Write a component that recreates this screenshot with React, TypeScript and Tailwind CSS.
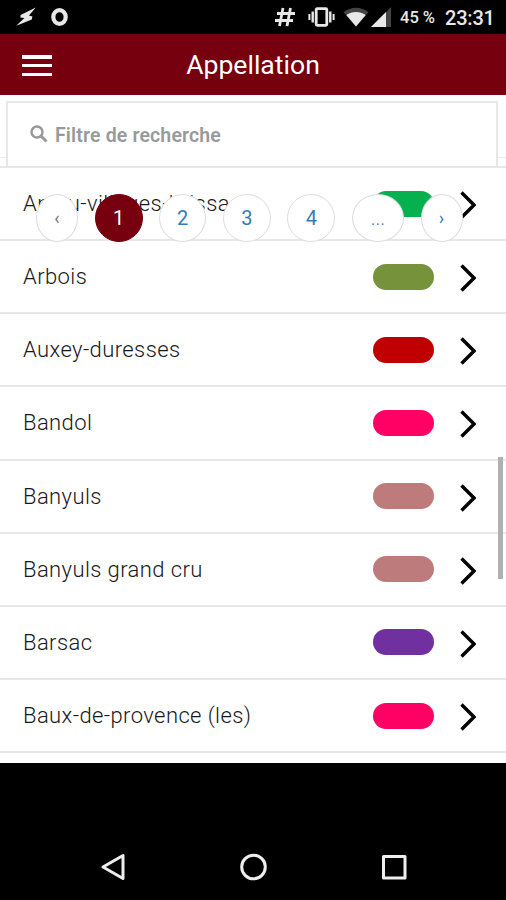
interface Appellation {
  name: string;
  color: string;
}

const appellations: Appellation[] = [
  { name: "Anjou-villages-brissac", color: "bg-[#04b14e]" },
  { name: "Arbois", color: "bg-[#76923a]" },
  { name: "Auxey-duresses", color: "bg-[#c00000]" },
  { name: "Bandol", color: "bg-[#ff0065]" },
  { name: "Banyuls", color: "bg-[#be7b7b]" },
  { name: "Banyuls grand cru", color: "bg-[#be7b7b]" },
  { name: "Barsac", color: "bg-[#7030a0]" },
  { name: "Baux-de-provence (les)", color: "bg-[#ff0065]" },
];

const pages = [
  { label: "‹", className: "w-[42px] bg-white text-[#777] border-[#ddd] text-[18px]" },
  { label: "1", className: "w-12 bg-[#76000d] text-white border-[#76000d] text-[20px]" },
  { label: "2", className: "w-[47px] bg-white text-[#337ab7] border-[#ddd] text-[20px]" },
  { label: "3", className: "w-12 bg-white text-[#337ab7] border-[#ddd] text-[20px]" },
  { label: "4", className: "w-12 bg-white text-[#337ab7] border-[#ddd] text-[20px]" },
  { label: "...", className: "w-[52px] bg-white text-[#337ab7] border-[#ddd] text-[20px] font-light" },
  { label: "›", className: "w-[42px] bg-white text-[#337ab7] border-[#ddd] text-[18px]" },
];

function StatusBar() {
  return (
    <div className="h-[34px] shrink-0 flex items-center bg-black text-[#e8e8e8]">
      <svg className="w-5 h-5 ml-4" viewBox="0 0 20 20" fill="currentColor">
        <path d="M19.8 0.5L4.6 8L4.4 10.4L8.4 11L0.3 18.8L15.8 12.4L16.4 9.6L13 8.4Z" />
      </svg>
      <svg className="w-[17px] h-[18px] ml-[15px]" viewBox="0 0 17 18" fill="none" stroke="currentColor" strokeWidth={4.2}>
        <ellipse cx="8.5" cy="9" rx="6.2" ry="6.9" />
      </svg>
      <div className="ml-auto flex items-center">
        <svg className="w-5 h-5" viewBox="0 0 20 20" fill="none" stroke="currentColor" strokeWidth={2.8}>
          <path d="M8 1L4.5 19M15.5 1L12 19M2 6.5H20M0 13.5H18" />
        </svg>
        <svg className="w-[27px] h-5 ml-[13px]" viewBox="0 0 27 20" fill="none" stroke="currentColor">
          <rect x="8.2" y="1.7" width="10.6" height="16.6" rx="1" strokeWidth={2.8} />
          <path d="M4.7 4.5V15.5M22.3 4.5V15.5" strokeWidth={2.4} />
          <path d="M1.4 7V13M25.6 7V13" strokeWidth={2} />
        </svg>
        <svg className="w-[26px] h-5 ml-2" viewBox="0 0 26 20">
          <path d="M0.5 5.2C8 -0.8 18 -0.8 25.5 5.2L13 19.5Z" fill="#444" />
          <path d="M3.3 8C9 3.9 17 3.9 22.7 8L13 19.5Z" fill="currentColor" />
        </svg>
        <svg className="w-5 h-5 ml-0.5" viewBox="0 0 20 20">
          <path d="M20 0V20H0Z" fill="#444" />
          <path d="M15 5V20H0Z" fill="currentColor" />
        </svg>
        <span className="w-[36px] ml-[9px] mt-0.5 text-[16.5px] font-medium whitespace-nowrap">45 %</span>
        <span className="w-[50px] ml-[9px] mr-[11px] mt-0.5 text-[20px] font-medium leading-6 tracking-[-0.2px]">23:31</span>
      </div>
    </div>
  );
}

function Header() {
  return (
    <header className="relative h-[61px] shrink-0 flex items-center justify-center bg-[#76000d] text-white">
      <button className="absolute left-[22px] top-[21px] w-[30px] h-[21px] flex flex-col justify-between">
        <span className="w-full h-[3.5px] bg-white" />
        <span className="w-full h-[3.5px] bg-white" />
        <span className="w-full h-[3.5px] bg-white" />
      </button>
      <h1 className="text-[26.6px] leading-8">Appellation</h1>
    </header>
  );
}

function SearchBar() {
  return (
    <div className="h-[73px] shrink-0 pl-1.5 pr-2 pt-[6px] border-b-2 border-[#e8e8e8] bg-[linear-gradient(#ececec,#ececec)] bg-[length:100%_1px] bg-[position:0_62px] bg-no-repeat">
      <div className="h-[65px] flex items-center pl-[22px] bg-white border-2 border-b-0 border-[#e8e8e8] text-[#999]">
        <svg className="w-[18px] h-[18px] -mt-0.5" viewBox="0 0 18 18" fill="none" stroke="currentColor" strokeWidth={2.5}>
          <circle cx="7" cy="7" r="5.5" />
          <path d="M11 11L16.5 16.5" strokeWidth={3} />
        </svg>
        <span className="ml-[7px] mt-[3px] text-[19.5px] font-semibold tracking-[0.15px]">Filtre de recherche</span>
      </div>
    </div>
  );
}

function Row({ name, color }: Appellation) {
  return (
    <li className="h-[73.15px] flex items-center pl-[23px] pr-[30px] border-b-2 border-[#e8e8e8]">
      <span className="flex-1 text-[22px] tracking-[0.4px] text-[#181818] font-[350]">{name}</span>
      <span className={`w-[61px] h-[26px] rounded-full ${color}`} />
      <svg className="w-4 h-7 ml-[26px] mt-[3px]" viewBox="0 0 16 28" fill="none" stroke="black" strokeWidth={3.4}>
        <path d="M1.5 1.5L14 14L1.5 26.5" />
      </svg>
    </li>
  );
}

function Pagination() {
  return (
    <nav className="absolute left-9 top-[99px] flex gap-[16.6px]">
      {pages.map((page) => (
        <button
          key={page.label}
          className={`h-12 shrink-0 rounded-[50%] border-[1.5px] leading-none ${page.className}`}
        >
          {page.label}
        </button>
      ))}
    </nav>
  );
}

export default function App() {
  return (
    <div className="w-[506px] h-[900px] flex flex-col overflow-hidden bg-black font-[Roboto,sans-serif]">
      <StatusBar />
      <Header />
      <main className="relative h-[668px] shrink-0 bg-white overflow-hidden">
        <SearchBar />
        <ul>
          {appellations.map((item) => (
            <Row key={item.name} {...item} />
          ))}
        </ul>
        <Pagination />
        {/* scroll thumb */}
        <div className="absolute right-[3px] top-[362px] w-[5px] h-[122px] bg-[#b0b0b0]" />
      </main>
      <nav className="flex-1 flex items-end justify-between pl-[100px] pr-[98px] pb-[19px] text-[#eee]">
        <svg className="w-7 h-7" viewBox="0 0 28 28" fill="none" stroke="currentColor" strokeWidth={3} strokeLinejoin="round">
          <path d="M23 2.5V25.5L3 14Z" />
        </svg>
        <svg className="w-7 h-7" viewBox="0 0 28 28" fill="none" stroke="currentColor" strokeWidth={3}>
          <circle cx="13.5" cy="14" r="11.8" />
        </svg>
        <svg className="w-7 h-7" viewBox="0 0 28 28" fill="none" stroke="currentColor" strokeWidth={3} strokeLinejoin="round">
          <rect x="3.5" y="3.5" width="21.5" height="21.5" />
        </svg>
      </nav>
    </div>
  );
}
